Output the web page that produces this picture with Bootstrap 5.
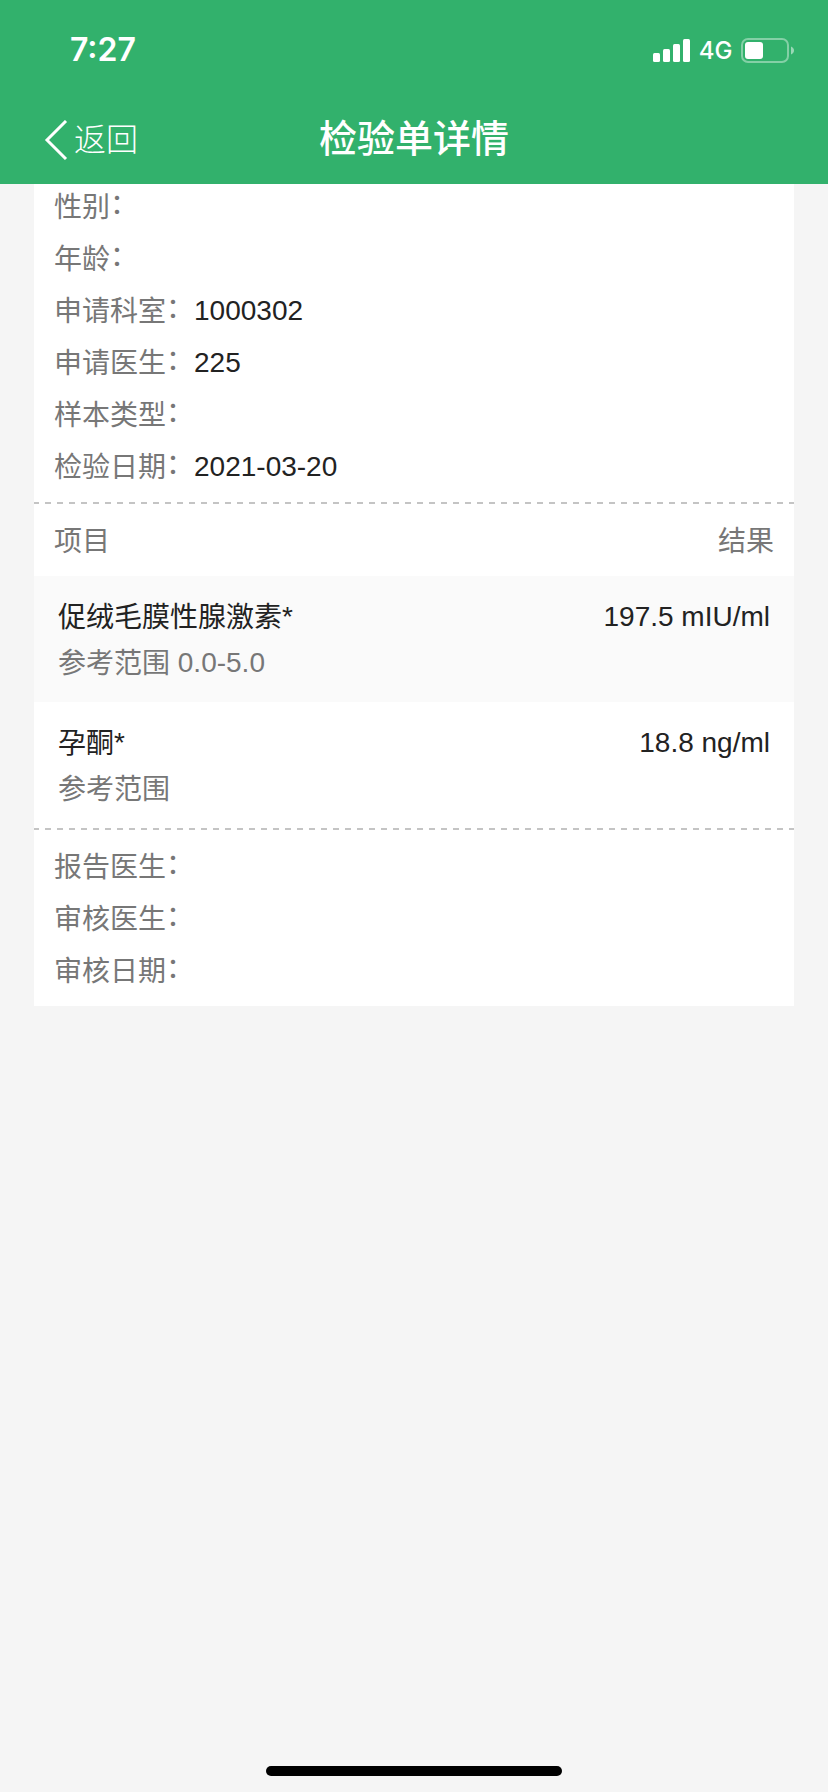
<!DOCTYPE html>
<html lang="zh-CN">
<head>
<meta charset="utf-8">
<meta name="viewport" content="width=device-width, initial-scale=1">
<title>检验单详情</title>
<link rel="stylesheet" href="https://cdn.jsdelivr.net/npm/bootstrap@5.3.0/dist/css/bootstrap.min.css">
<style>
body{background:#f5f5f5;font-family:"Liberation Sans","Noto Sans CJK SC",sans-serif;font-size:28px;color:#222;height:1792px;overflow:hidden}
.app-top{background:#32b16c;height:184px;z-index:2}
.status{height:100px;padding:0 34px 0 70px;font-family:Inter,sans-serif}
.clock{font-size:32px;font-weight:600;line-height:100px}
.network{font-size:24px;font-weight:500;line-height:100px;width:51px;padding-top:2px}
.title-bar{display:grid;grid-template-columns:1fr auto 1fr;height:80px;padding:0 44px;line-height:80px;font-family:"Noto Sans CJK SC",sans-serif}
.back{font-size:32px;font-weight:300;gap:6px}
.back span{line-height:75px;height:80px}
.title{font-size:38px;font-weight:500;line-height:72px}
.report{margin:-4px 34px 0}
.field{height:52px;line-height:54px;padding:0 20px;white-space:nowrap}
.label{display:inline-block;line-height:1;transform:translateY(1px)}
.colon{display:inline-block;line-height:1;transform:translateY(-3px)}
.muted{color:#777}
.dashes{height:2px;background:repeating-linear-gradient(90deg,#c4c4c4 0 6px,transparent 6px 12px) -1px 0/804px 2px}
.heads{height:72px;line-height:75px;padding:0 20px}
.result{height:126px;padding:18px 24px 0}
.result>div>div{height:46px;line-height:46px}
.result:nth-child(odd){background:#fafafa}
.home-bar{width:296px;height:10px;margin-bottom:16px}
</style>
</head>
<body class="d-flex flex-column">
<header class="app-top position-relative flex-shrink-0 text-white">
  <div class="status d-flex align-items-center">
    <span class="clock me-auto">7:27</span>
    <svg width="37" height="23" viewBox="0 0 37 23" fill="#fff"><rect y="14" width="7" height="9" rx="1.5"/><rect x="10" y="10" width="7" height="13" rx="1.5"/><rect x="20" y="5" width="7" height="18" rx="1.5"/><rect x="30" width="7" height="23" rx="1.5"/></svg>
    <span class="network text-center">4G</span>
    <svg width="53" height="25" viewBox="0 0 53 25"><rect x="1" y="1" width="46" height="23" rx="6" fill="none" stroke="#fff" stroke-opacity=".4" stroke-width="2"/><rect x="4" y="4" width="18" height="17" rx="3" fill="#fff"/><path d="M50 8.500c4 1.500 4 6.500 0 8z" fill="#fff" fill-opacity=".5"/></svg>
  </div>
  <nav class="title-bar">
    <div class="back d-flex align-items-center"><svg width="24" height="40" viewBox="0 0 24 40" fill="none" stroke="#fff" stroke-width="3"><path d="M22 1 3 20l19 19"/></svg><span>返回</span></div>
    <div class="title">检验单详情</div>
    <div></div>
  </nav>
</header>
<main class="report bg-white">
  <section>
    <div class="field"><span class="label muted">性别<span class="colon">：</span></span></div>
    <div class="field"><span class="label muted">年龄<span class="colon">：</span></span></div>
    <div class="field"><span class="label muted">申请科室<span class="colon">：</span></span>1000302</div>
    <div class="field"><span class="label muted">申请医生<span class="colon">：</span></span>225</div>
    <div class="field"><span class="label muted">样本类型<span class="colon">：</span></span></div>
    <div class="field"><span class="label muted">检验日期<span class="colon">：</span></span>2021-03-20</div>
  </section>
  <div class="dashes" style="margin-top:10px"></div>
  <div class="heads muted d-flex justify-content-between"><span>项目</span><span>结果</span></div>
  <section>
    <div class="result d-flex justify-content-between">
      <div><div><span class="label">促绒毛膜性腺激素</span>*</div><div class="muted"><span class="label">参考范围</span> 0.0-5.0</div></div>
      <div><div>197.5 mIU/ml</div></div>
    </div>
    <div class="result d-flex justify-content-between">
      <div><div><span class="label">孕酮</span>*</div><div class="muted"><span class="label">参考范围</span></div></div>
      <div><div>18.8 ng/ml</div></div>
    </div>
  </section>
  <div class="dashes"></div>
  <section style="padding:10px 0">
    <div class="field"><span class="label muted">报告医生<span class="colon">：</span></span></div>
    <div class="field"><span class="label muted">审核医生<span class="colon">：</span></span></div>
    <div class="field"><span class="label muted">审核日期<span class="colon">：</span></span></div>
  </section>
</main>
<div class="home-bar bg-black rounded-pill mx-auto mt-auto flex-shrink-0"></div>
<script src="https://cdn.jsdelivr.net/npm/bootstrap@5.3.0/dist/js/bootstrap.bundle.min.js"></script>
</body>
</html>
